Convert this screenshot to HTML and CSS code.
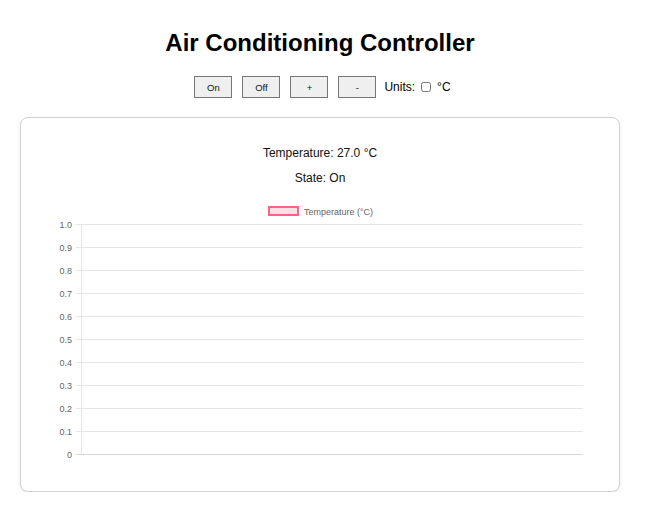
FILE: index.html
```html
<!DOCTYPE html>
<html lang="en">
<head>
<meta charset="utf-8">
<title>Air Conditioning Controller</title>
<link rel="stylesheet" href="styles.css">
</head>
<body>
<div class="page">
  <h1 class="title">Air Conditioning Controller</h1>
  <div class="controls">
    <button class="btn" type="button">On</button>
    <button class="btn" type="button">Off</button>
    <button class="btn" type="button">+</button>
    <button class="btn" type="button">-</button>
    <label class="units">Units: <input class="units-check" type="checkbox"> °C</label>
  </div>
  <div class="card">
    <p class="reading">Temperature: 27.0 °C</p>
    <p class="reading">State: On</p>
    <svg class="chart" width="558" height="275" viewBox="0 0 558 275" xmlns="http://www.w3.org/2000/svg">
      <rect class="legend-box" x="228" y="11" width="29" height="8"/>
      <text class="legend-text" x="263" y="18.5">Temperature (°C)</text>
      <g class="grid">
        <line x1="35" x2="542" y1="28.5" y2="28.5"/>
        <line x1="35" x2="542" y1="51.5" y2="51.5"/>
        <line x1="35" x2="542" y1="74.5" y2="74.5"/>
        <line x1="35" x2="542" y1="97.5" y2="97.5"/>
        <line x1="35" x2="542" y1="120.5" y2="120.5"/>
        <line x1="35" x2="542" y1="143.5" y2="143.5"/>
        <line x1="35" x2="542" y1="166.5" y2="166.5"/>
        <line x1="35" x2="542" y1="189.5" y2="189.5"/>
        <line x1="35" x2="542" y1="212.5" y2="212.5"/>
        <line x1="35" x2="542" y1="235.5" y2="235.5"/>
        <line x1="40.5" x2="40.5" y1="28" y2="258"/>
      </g>
      <line class="zero" x1="35" x2="542" y1="258.5" y2="258.5"/>
      <g class="ticks">
        <text x="31" y="31.5">1.0</text>
        <text x="31" y="54.5">0.9</text>
        <text x="31" y="77.5">0.8</text>
        <text x="31" y="100.5">0.7</text>
        <text x="31" y="123.5">0.6</text>
        <text x="31" y="146.5">0.5</text>
        <text x="31" y="169.5">0.4</text>
        <text x="31" y="192.5">0.3</text>
        <text x="31" y="215.5">0.2</text>
        <text x="31" y="238.5">0.1</text>
        <text x="31" y="261.5">0</text>
      </g>
    </svg>
  </div>
</div>
</body>
</html>
```
FILE: styles.css
```css
html, body {
  margin: 0;
  padding: 0;
  background: #ffffff;
}

body {
  font-family: "Liberation Sans", Arial, sans-serif;
  color: #000;
}

.page {
  width: 640px;
  text-align: center;
}

.title {
  margin: 29px 0 19px;
  font-size: 24px;
  line-height: 28px;
  font-weight: bold;
}

.controls {
  display: flex;
  justify-content: center;
  align-items: center;
  height: 22px;
}

.btn {
  box-sizing: border-box;
  width: 38px;
  height: 22px;
  margin: 0 5px;
  padding: 0;
  font-family: "Liberation Sans", Arial, sans-serif;
  font-size: 9.5px;
  color: #111;
  background: #efefef;
  border: 1px solid #767676;
  border-radius: 0;
}

.units {
  display: flex;
  align-items: center;
  margin-left: 3px;
  font-size: 12px;
  line-height: 14px;
}

.units-check {
  width: 10px;
  height: 10px;
  margin: 0 6px 0 6px;
}

.card {
  margin: 19px 20px 0;
  padding: 17px 20px 20px;
  border: 1px solid #d0d0d0;
  border-radius: 8px;
  box-shadow: 0 2px 4px rgba(0, 0, 0, 0.08);
  background: #fff;
}

.reading {
  margin: 11px 0;
  font-size: 12px;
  line-height: 14px;
  color: #111;
}

.chart {
  display: block;
  font-family: "Liberation Sans", Arial, sans-serif;
}

.legend-box {
  fill: rgba(255, 99, 132, 0.2);
  stroke: rgb(255, 99, 132);
  stroke-width: 2;
}

.legend-text {
  font-size: 9px;
  fill: #666;
}

.grid line {
  stroke: #e6e6e6;
  stroke-width: 1;
}

.zero {
  stroke: #d6d6d6;
  stroke-width: 1;
}

.ticks text {
  font-size: 9px;
  fill: #666;
  text-anchor: end;
}
```
